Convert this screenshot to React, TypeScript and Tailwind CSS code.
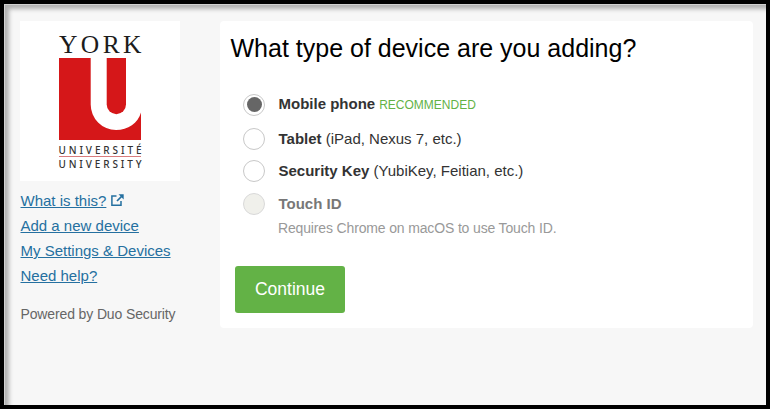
import { useState } from 'react';
import clsx from 'clsx';

interface DeviceOption {
  id: string;
  label: string;
  detail?: string;
  recommended?: boolean;
  disabled?: boolean;
  spacing: string;
}

const devices: DeviceOption[] = [
  { id: 'phone', label: 'Mobile phone', recommended: true, spacing: 'mb-[11px]' },
  { id: 'tablet', label: 'Tablet', detail: '(iPad, Nexus 7, etc.)', spacing: 'mb-[9px]' },
  { id: 'key', label: 'Security Key', detail: '(YubiKey, Feitian, etc.)', spacing: 'mb-2.5' },
  { id: 'touch', label: 'Touch ID', disabled: true, spacing: '' },
];

const links = ['What is this?', 'Add a new device', 'My Settings & Devices', 'Need help?'];

function YorkLogo() {
  return (
    <svg viewBox="0 0 160 160" className="block size-40 bg-white">
      <text x="39" y="32" fontSize="25.5" textLength="82.500" fill="#1c1c1c" fontFamily="'Liberation Serif', serif">
        YORK
      </text>
      <path d="M39 37H70.7V83.5A25.5 25.5 0 0 0 96 109C108 109 118 102 121 91.500V119H39Z" fill="#d51719" />
      <path d="M86.700 37H106V83.500A9.650 9.650 0 0 1 86.700 83.500Z" fill="#d51719" />
      <text x="38.500" y="132.500" fontSize="10" fontWeight="500" textLength="83" fill="#333" fontFamily="'Noto Sans', sans-serif">
        UNIVERSITÉ
      </text>
      <path d="M39 135.500H121" stroke="#cf5a5c" strokeWidth="0.8" />
      <text x="38.500" y="146.500" fontSize="10" fontWeight="500" textLength="83" fill="#333" fontFamily="'Noto Sans', sans-serif">
        UNIVERSITY
      </text>
    </svg>
  );
}

function ExternalIcon() {
  return (
    <svg viewBox="0 0 13 13" className="ml-[5px] mt-[6px] size-[13px]" fill="none" stroke="#2570a0" strokeWidth="1.5">
      <path d="M5.500 2H0.900V11.300H10V7" />
      <path d="M6 7L10.500 2.500" strokeWidth="1.7" />
      <path d="M7.500 0.300H12.700V5.500Z" fill="#2570a0" stroke="none" />
    </svg>
  );
}

export default function App() {
  const [selected, setSelected] = useState('phone');

  return (
    <div className="h-[409px] w-[770px] overflow-hidden border-4 border-black bg-[#f7f7f7] font-['Liberation_Sans',Arial,sans-serif]">
      <div className="flex h-full gap-10 pl-4 pt-[17px] shadow-[inset_1px_1px_0_#d0d0d0,inset_5px_5px_4px_#b0b0b0]">
        <aside className="w-40 shrink-0">
          <YorkLogo />
          <nav className="mt-[7px] pl-[0.5px] text-[15px] leading-[25px] text-[#2570a0]">
            {links.map((link, index) => (
              <div key={link} className="flex whitespace-nowrap">
                <a href="#" className="underline">{link}</a>
                {index === 0 && <ExternalIcon />}
              </div>
            ))}
          </nav>
          <p className="mt-4 whitespace-nowrap pl-[0.5px] text-[14px] leading-5 tracking-[-0.13px] text-[#666]">Powered by Duo Security</p>
        </aside>

        <main className="h-[307px] w-[533px] rounded bg-white">
          <h1 className="pl-[10.5px] pt-3 text-[25px] leading-[30px] text-black">What type of device are you adding?</h1>
          <div className="mt-[30px] pl-[23px]">
            {devices.map((device) => (
              <label key={device.id} className={clsx('flex h-[23px] items-center', device.spacing)}>
                <input
                  type="radio"
                  name="device"
                  className="sr-only"
                  checked={selected === device.id}
                  disabled={device.disabled}
                  onChange={() => setSelected(device.id)}
                />
                <span
                  className={clsx(
                    'flex size-[22px] shrink-0 items-center justify-center rounded-full border',
                    device.disabled ? 'border-[#d9d9d9] bg-[#f0f0eb]' : 'border-[#c8c8c8] bg-white'
                  )}
                >
                  {selected === device.id && <span className="size-[15px] rounded-full bg-[#666]" />}
                </span>
                <span className={clsx('ml-[13.5px] text-[15px] leading-5', device.disabled ? 'text-[#777]' : 'text-[#333]')}>
                  <b>{device.label}</b>
                  {device.detail && ` ${device.detail}`}
                  {device.recommended && <span className="ml-1 text-[12px] text-[#63b246]">RECOMMENDED</span>}
                </span>
              </label>
            ))}
            <p className="ml-[35px] mt-[3px] text-[14px] leading-5 tracking-[-0.15px] text-[#999]">Requires Chrome on macOS to use Touch ID.</p>
          </div>
          <button className="ml-[15px] mt-7 h-[47px] w-[110px] rounded-[3px] bg-[#63b246] text-[17.5px] text-white">
            Continue
          </button>
        </main>
      </div>
    </div>
  );
}
